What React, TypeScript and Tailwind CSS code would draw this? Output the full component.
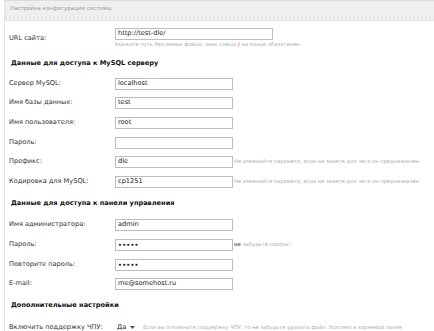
import React from "react";

const font = { fontFamily: '"DejaVu Sans", Verdana, sans-serif' };

type Row = {
  label: string;
  value?: string;
  password?: boolean;
  hint?: React.ReactNode;
};

const mysqlRows: Row[] = [
  { label: "Сервер MySQL:", value: "localhost" },
  { label: "Имя базы данных:", value: "test" },
  { label: "Имя пользователя:", value: "root" },
  { label: "Пароль:", value: "" },
  { label: "Префикс:", value: "dle", hint: "Не изменяйте параметр, если не знаете для чего он предназначен" },
  { label: "Кодировка для MySQL:", value: "cp1251", hint: "Не изменяйте параметр, если не знаете для чего он предназначен" },
];

const adminRows: Row[] = [
  { label: "Имя администратора:", value: "admin" },
  {
    label: "Пароль:",
    value: "•••••",
    password: true,
    hint: (
      <>
        <span className="font-bold text-[#777]">не</span> забудьте пароль!
      </>
    ),
  },
  { label: "Повторите пароль:", value: "•••••", password: true },
  { label: "E-mail:", value: "me@somehost.ru" },
];

const Field = ({ value, password, wide }: { value?: string; password?: boolean; wide?: boolean }) => (
  <div
    className={`${wide ? "w-[158px]" : "w-[118px]"} h-[12px] border border-[#bdbdbd] bg-white flex items-center px-[2px] text-[6.6px] text-[#222] ${
      password ? "tracking-[0.3px] font-bold text-[6px]" : ""
    }`}
  >
    {value}
  </div>
);

const Heading = ({ children, className = "" }: { children: React.ReactNode; className?: string }) => (
  <div className={`flex items-center pl-[2px] text-[6.6px] font-bold text-[#111] ${className}`}>{children}</div>
);

const FormRow = ({ row }: { row: Row }) => (
  <div className="grid grid-cols-[106px_1fr] items-center h-[19.6px]">
    <div className="text-[6.6px] text-[#333]">{row.label}</div>
    <div className="flex items-center gap-[1px]">
      <Field value={row.value} password={row.password} />
      {row.hint && <span className="text-[5.2px] text-[#aaa] whitespace-nowrap">{row.hint}</span>}
    </div>
  </div>
);

export default function App() {
  return (
    <div className="w-[434px] h-[331px] overflow-hidden bg-white" style={font}>
      <div className="ml-[4px] border-l border-[#e2e2e2] h-full">
        <div className="border-t border-[#dcdcdc] bg-[#efefef] h-[16px] flex items-center pl-[5px] text-[5.5px] text-[#9a9a9a]">
          Настройка конфигурации системы
        </div>
        <div className="h-[5px] bg-[repeating-linear-gradient(90deg,#e4e4e4_0px,#e4e4e4_2px,#f6f6f6_2px,#f6f6f6_4px)] border-b border-[#e8e8e8]" />

        <div className="pl-[4px] pt-[7px]">
          <div className="grid grid-cols-[106px_1fr] items-center">
            <div className="text-[6.6px] text-[#333]">URL сайта:</div>
            <div className="flex flex-col">
              <Field value="http://test-dle/" wide />
              <div className="text-[5.2px] text-[#aaa] leading-[9px] whitespace-nowrap">
                Укажите путь без имени файла, знак слеша <span className="text-[#e23c3c] font-bold">/</span> на конце обязателен
              </div>
            </div>
          </div>

          <Heading className="h-[21px] mt-[4px]">Данные для доступа к MySQL серверу</Heading>
          {mysqlRows.map((r) => (
            <FormRow key={r.label} row={r} />
          ))}

          <Heading className="h-[24px]">Данные для доступа к панели управления</Heading>
          {adminRows.map((r, i) => (
            <FormRow key={i} row={r} />
          ))}

          <Heading className="h-[24px]">Дополнительные настройки</Heading>
          <div className="grid grid-cols-[106px_1fr] items-center h-[19.6px]">
            <div className="text-[6.6px] text-[#333]">Включить поддержку ЧПУ:</div>
            <div className="flex items-center gap-[6px]">
              <div className="w-[22px] h-[11px] flex items-center justify-between px-[2px] text-[6.6px] text-[#222]">
                <span>Да</span>
                <svg width="5" height="3" viewBox="0 0 5 3">
                  <path d="M0 0 L5 0 L2.5 3 Z" fill="#555" />
                </svg>
              </div>
              <span className="text-[5.2px] text-[#aaa] whitespace-nowrap">
                Если вы отключите поддержку ЧПУ, то не забудьте удалить файл .htaccess в корневой папке
              </span>
            </div>
          </div>
        </div>
      </div>
    </div>
  );
}
